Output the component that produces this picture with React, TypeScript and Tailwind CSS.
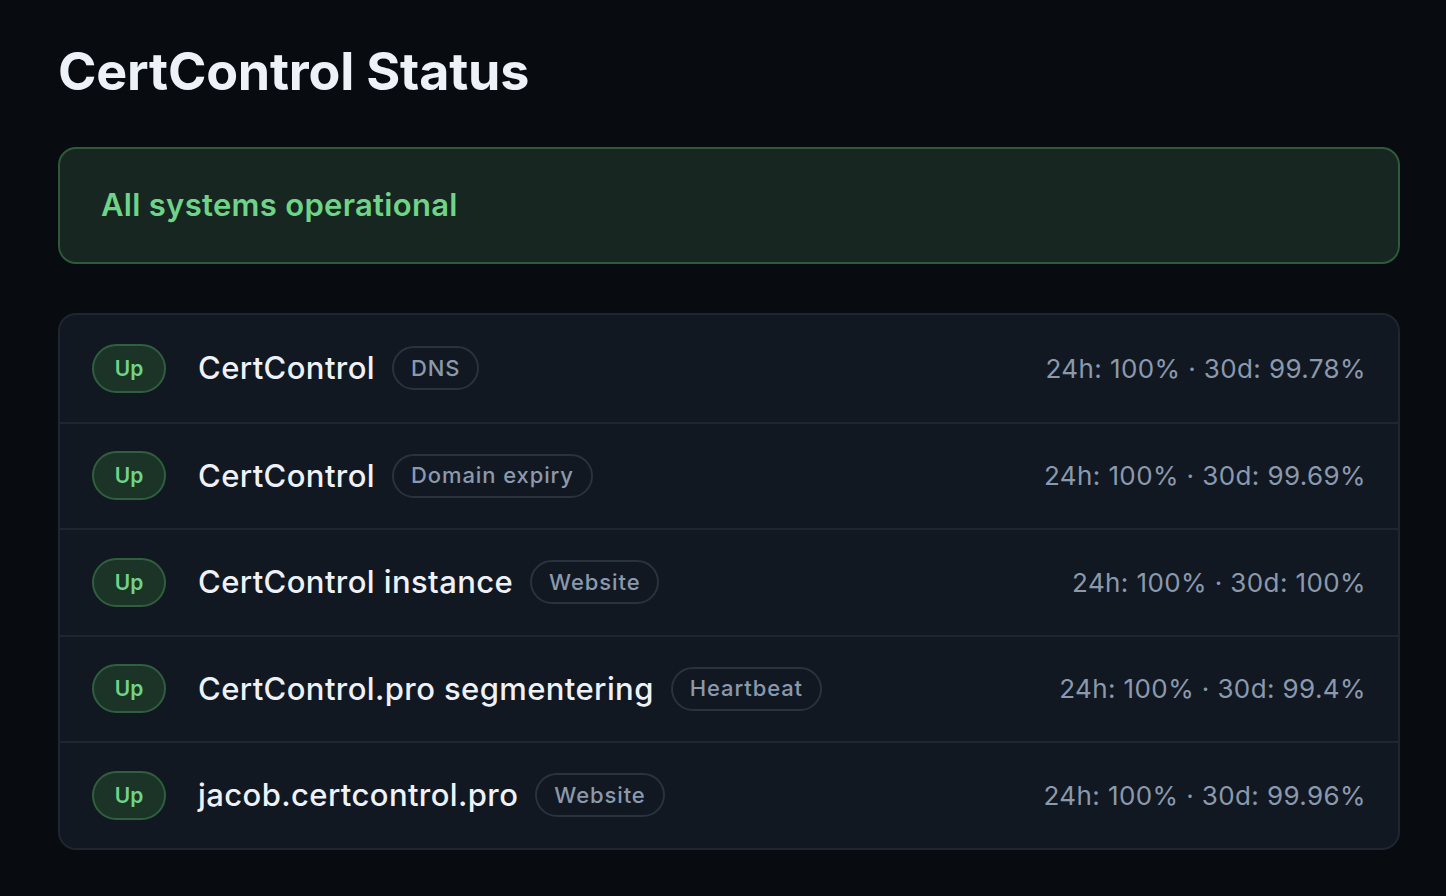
const monitors = [
  { name: "CertControl", type: "DNS", day: "100%", month: "99.78%" },
  { name: "CertControl", type: "Domain expiry", day: "100%", month: "99.69%" },
  { name: "CertControl instance", type: "Website", day: "100%", month: "100%" },
  { name: "CertControl.pro segmentering", type: "Heartbeat", day: "100%", month: "99.4%" },
  { name: "jacob.certcontrol.pro", type: "Website", day: "100%", month: "99.96%" },
];

export default function App() {
  return (
    <div className="min-h-screen bg-[#080b10] pl-[58px] pr-[46px] pt-[40px] pb-10 font-['Inter',sans-serif]">
      <h1 className="text-[52px] leading-[64px] font-bold tracking-[-0.2px] text-[#edf2f9]">
        CertControl Status
      </h1>

      <div className="mt-[43px] h-[117px] flex items-center rounded-[18px] border-2 border-[#2e5a3a] bg-[#172620] px-[41px]">
        <span className="text-[31px] font-semibold tracking-[0.3px] text-[#6fd487]">
          All systems operational
        </span>
      </div>

      <div className="mt-[49px] overflow-hidden rounded-[18px] border-2 border-[#1f2630] bg-[#111822]">
        {monitors.map((m, i) => (
          <div
            key={i}
            className={
              "h-[106.5px] flex items-center px-[32px] " +
              (i > 0 ? "border-t-2 border-[#1f2630]" : "")
            }
          >
            <span className="w-[74px] h-[49px] flex items-center justify-center rounded-full border-2 border-[#2f5f3c] bg-[#1c3328] text-[21px] font-semibold text-[#6fd487]">
              Up
            </span>
            <span className="ml-[32px] text-[31px] font-medium tracking-[0.4px] text-[#eef2f8]">
              {m.name}
            </span>
            <span className="ml-[17px] h-[44px] flex items-center rounded-full border-2 border-[#2a323d] px-[17px] text-[22px] font-medium tracking-[0.9px] text-[#8b99ad]">
              {m.type}
            </span>
            <span className="ml-auto text-[26px] tracking-[0.4px] text-[#8b99ad]">
              24h: {m.day} · 30d: {m.month}
            </span>
          </div>
        ))}
      </div>
    </div>
  );
}
